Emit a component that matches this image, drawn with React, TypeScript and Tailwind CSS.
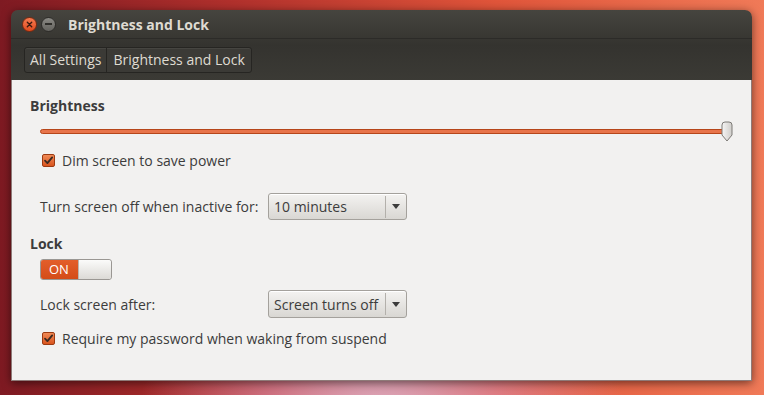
import { useState } from "react";

const font = { fontFamily: '"Open Sans", "Noto Sans", sans-serif' };

const Check = ({ label }: { label: string }) => (
  <div className="flex h-[20px] items-center pl-[30px] text-[14px] text-[#3c3c3c]">
    <span className="flex h-[13px] w-[13px] items-center justify-center rounded-[2px] border border-[#9c3a12] bg-linear-to-b from-[#f08a55] to-[#d9541c]">
      <svg viewBox="0 0 12 12" className="h-[11px] w-[11px]">
        <path d="M2.2 6.2 L4.8 8.8 L10 2.6" fill="none" stroke="#3a2a22" strokeWidth={2} strokeLinecap="round" strokeLinejoin="round" />
      </svg>
    </span>
    <span className="ml-[7px]">{label}</span>
  </div>
);

const Combo = ({ value }: { value: string }) => (
  <div className="flex h-full w-[139px] items-center rounded-[3px] border border-[#a4a19c] bg-linear-to-b from-[#f4f3f1] to-[#d9d7d3] text-[14px] text-[#3c3c3c] shadow-[inset_0_1px_0_#ffffff]">
    <span className="flex-1 pl-[5px]">{value}</span>
    <span className="h-[22px] w-px bg-[#b3b0ab]" />
    <span className="flex w-[20px] justify-center">
      <svg viewBox="0 0 8 5" className="h-[5px] w-[8px]">
        <path d="M0 0 H8 L4 5 Z" fill="#3c3c3c" />
      </svg>
    </span>
  </div>
);

export default function App() {
  const [on] = useState(true);
  return (
    <div
      className="h-[395px] w-[764px] overflow-hidden bg-[radial-gradient(ellipse_at_50%_110%,#dcb0c4_0%,rgba(220,150,180,0.6)_22%,rgba(0,0,0,0)_45%),linear-gradient(to_right,#7e1a22_0%,#b0302c_30%,#e0553a_65%,#f07a58_100%)] pl-[11px] pt-[10px]"
      style={font}
    >
      <div className="w-[741px] overflow-hidden rounded-t-[7px] shadow-[0_2px_10px_rgba(0,0,0,0.55)]">
        <div className="bg-linear-to-b from-[#46453f] via-[#34332f] to-[#3b3a35]">
          <div className="flex h-[28px] items-center">
            <span className="ml-[11px] flex h-[15px] w-[15px] items-center justify-center rounded-full border border-[#7c2a10] bg-linear-to-b from-[#f57a50] to-[#df4a1c]">
              <svg viewBox="0 0 8 8" className="h-[7px] w-[7px]">
                <path d="M1.5 1.5 L6.5 6.5 M6.5 1.5 L1.5 6.5" stroke="#3a1a10" strokeWidth={1.6} strokeLinecap="round" />
              </svg>
            </span>
            <span className="ml-[4px] flex h-[15px] w-[15px] items-center justify-center rounded-full border border-[#2e2d2a] bg-linear-to-b from-[#8a8984] to-[#64635e]">
              <span className="h-[1.5px] w-[7px] bg-[#302f2b]" />
            </span>
            <span className="ml-[12px] text-[14px] font-bold text-[#dfdbd2]">Brightness and Lock</span>
          </div>
          <div className="flex h-[42px] items-center border-t border-[#2c2b28] pl-[13px]">
            <div className="flex h-[26px] items-stretch rounded-[3px] border border-[#262522] bg-[#3b3a36] text-[14px] text-[#dfdbd2] shadow-[inset_0_1px_0_rgba(255,255,255,0.06)]">
              <span className="flex items-center px-[5px]">All Settings</span>
              <span className="w-px bg-[#262522]" />
              <span className="flex items-center px-[6px]">Brightness and Lock</span>
            </div>
          </div>
        </div>

        <div className="h-[301px] border-x border-b border-[#8e7a78] bg-[#f2f1f0] pt-[16px] text-[14px] text-[#3c3c3c]">
          <div className="flex h-[18px] items-center pl-[18px] font-bold">Brightness</div>

          <div className="relative mt-[7px] flex h-[20px] items-center pl-[28px] pr-[12px]">
            <div className="h-[5px] w-[689px] rounded-full border border-[#b6461a] bg-[#e8744a]" />
            <svg viewBox="0 0 12 21" className="absolute left-[709px] top-0 h-[21px] w-[12px]">
              <defs>
                <linearGradient id="th" x1="0" y1="0" x2="1" y2="0">
                  <stop offset="0" stopColor="#f6f5f4" />
                  <stop offset="1" stopColor="#cfcdca" />
                </linearGradient>
              </defs>
              <path d="M1 4 Q1 1 4 1 H8 Q11 1 11 4 V14 L6 20 L1 14 Z" fill="url(#th)" stroke="#7d7a76" strokeWidth={1} />
            </svg>
          </div>

          <div className="mt-[9px]">
            <Check label="Dim screen to save power" />
          </div>

          <div className="mt-[23px] flex h-[27px] items-center pl-[28px]">
            <span className="w-[228px]">Turn screen off when inactive for:</span>
            <Combo value="10 minutes" />
          </div>

          <div className="mt-[14px] flex h-[18px] items-center pl-[18px] font-bold">Lock</div>

          <div className="mt-[7px] pl-[28px]">
            <div className="flex h-[21px] w-[72px] overflow-hidden rounded-[3px] border border-[#9a9793]">
              <span className="flex w-[37px] items-center pl-[8px] text-[13px] text-white bg-linear-to-b from-[#e35e2a] to-[#d44c18]">
                {on ? "ON" : "OFF"}
              </span>
              <span className="flex-1 rounded-r-[2px] border-l border-[#b9b6b1] bg-linear-to-b from-[#fbfbfa] to-[#dcdad6]" />
            </div>
          </div>

          <div className="mt-[10px] flex h-[28px] items-center pl-[28px]">
            <span className="w-[228px]">Lock screen after:</span>
            <Combo value="Screen turns off" />
          </div>

          <div className="mt-[10px]">
            <Check label="Require my password when waking from suspend" />
          </div>
        </div>
      </div>
    </div>
  );
}
